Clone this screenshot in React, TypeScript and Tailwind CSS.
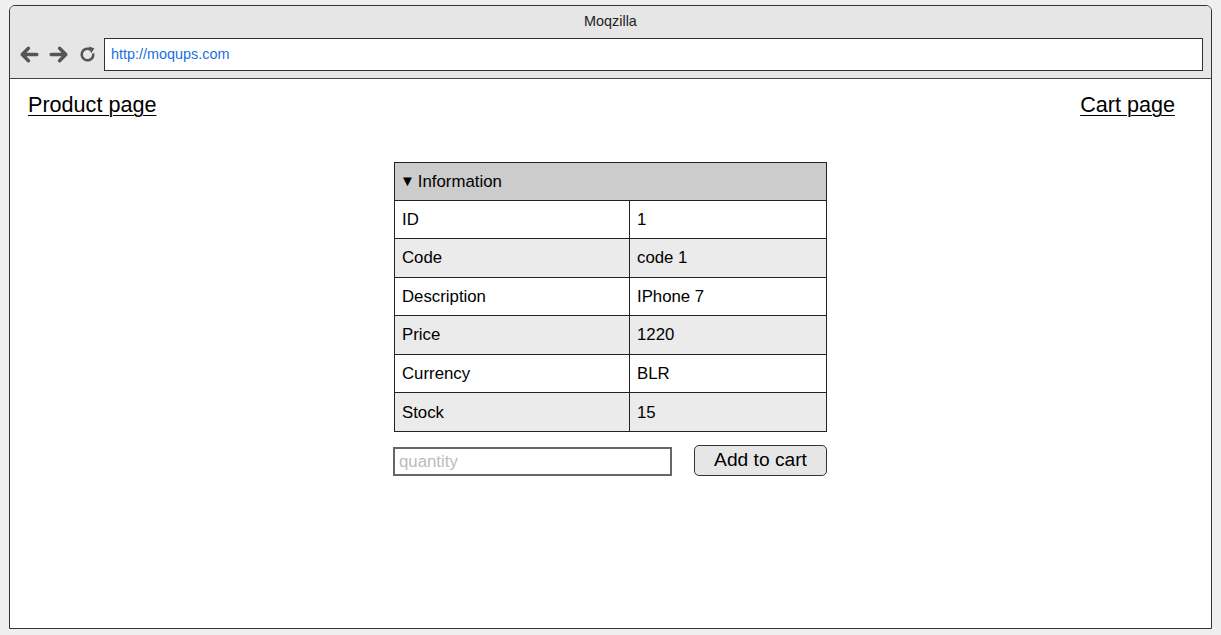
import React from "react";

const rows = [
  ["ID", "1"],
  ["Code", "code 1"],
  ["Description", "IPhone 7"],
  ["Price", "1220"],
  ["Currency", "BLR"],
  ["Stock", "15"],
];

const App = () => {
  return (
    <div className="w-[1221px] h-[635px] bg-[#efefef] pl-[9px] pr-[9px] pt-[5px] font-['Liberation_Sans',Arial,sans-serif] text-black overflow-hidden">
      <div className="h-[624px] border border-[#333] rounded-t-[6px] bg-white flex flex-col overflow-hidden">
        {/* browser chrome */}
        <div className="h-[73px] bg-[#e6e6e6] border-b border-[#444] flex flex-col">
          <div className="h-[31px] flex items-center justify-center text-[14.4px] text-[#222]">
            Moqzilla
          </div>
          <div className="flex items-center pl-[9px] pr-[8px] pt-[1px]">
            <div className="flex items-center gap-[8px] text-[#555]">
              <svg width="21" height="21" viewBox="0 0 20 20" fill="none" stroke="#555" strokeWidth="3.2" strokeLinecap="round" strokeLinejoin="round">
                <path d="M17 10H3M9 4L3 10L9 16" />
              </svg>
              <svg width="21" height="21" viewBox="0 0 20 20" fill="none" stroke="#555" strokeWidth="3.2" strokeLinecap="round" strokeLinejoin="round">
                <path d="M3 10H17M11 4L17 10L11 16" />
              </svg>
              <svg width="19" height="19" viewBox="0 0 18 18" fill="none" className="ml-[1px]">
                <path d="M14.5 9A5.5 5.5 0 1 1 11.8 4.3" stroke="#555" strokeWidth="2.4" strokeLinecap="round" />
                <path d="M10 1.5L15.5 3L12.5 7.8Z" fill="#555" />
              </svg>
            </div>
            <div className="ml-[7px] flex-1 h-[33px] bg-white border-[1.5px] border-[#333] flex items-center pl-[6px] text-[14.4px] text-[#1a6fe0]">
              http://moqups.com
            </div>
          </div>
        </div>

        {/* page */}
        <div className="flex-1 flex flex-col">
          <div className="flex justify-between pl-[18px] pr-[36px] pt-[12px] text-[21.6px] leading-[27px]">
            <a className="underline underline-offset-[3px] decoration-1 cursor-pointer">Product page</a>
            <a className="underline underline-offset-[3px] decoration-1 cursor-pointer">Cart page</a>
          </div>

          <div className="mx-auto mt-[44px] w-[433px]">
            <div className="border border-[#222] text-[16.8px]">
              <div className="h-[38px] bg-[#cccccc] border-b border-[#222] flex items-center pl-[5px]">
                <span className="text-[15px] mr-[3px]">▼</span>Information
              </div>
              {rows.map(([k, v], i) => (
                <div
                  key={k}
                  className={`h-[38.4px] flex ${i % 2 === 1 ? "bg-[#ebebeb]" : "bg-white"} ${i < rows.length - 1 ? "border-b border-[#222]" : ""}`}
                >
                  <div className="w-[235px] border-r border-[#222] flex items-center pl-[7px]">{k}</div>
                  <div className="flex-1 flex items-center pl-[7px]">{v}</div>
                </div>
              ))}
            </div>

            <div className="mt-[13px] flex items-center justify-between">
              <input
                placeholder="quantity"
                className="ml-[-1px] w-[279px] h-[29px] mt-[2px] border-2 border-[#666] px-[4px] text-[16.8px] placeholder:text-[#bbbbbb] outline-none"
              />
              <button className="w-[133px] h-[31px] bg-[#e6e6e6] border border-[#333] rounded-[5px] text-[19.2px] leading-none pb-[3px]">
                Add to cart
              </button>
            </div>
          </div>
        </div>
      </div>
    </div>
  );
};

export default App;
